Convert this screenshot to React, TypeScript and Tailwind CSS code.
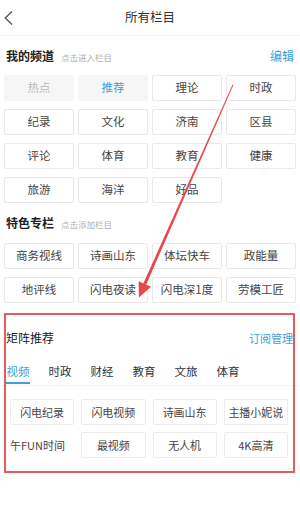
import type { ReactNode } from "react";

const MY_CHANNELS = [
  "热点", "推荐", "理论", "时政",
  "纪录", "文化", "济南", "区县",
  "评论", "体育", "教育", "健康",
  "旅游", "海洋", "好品",
];

const FEATURED = ["商务视线", "诗画山东", "体坛快车", "政能量", "地评线", "闪电夜读", "闪电深1度", "劳模工匠"];

const TABS = ["视频", "时政", "财经", "教育", "文旅", "体育"];

const MATRIX = ["闪电纪录", "闪电视频", "诗画山东", "主播小妮说", "午FUN时间", "最视频", "无人机", "4K高清"];

function Cell({ children, tone = "normal" }: { children: ReactNode; tone?: "normal" | "fixed" | "active" }) {
  if (tone !== "normal") {
    return (
      <div
        className={
          "flex h-[26px] items-center justify-center rounded-[2px] bg-[#f6f6f6] text-[11.5px] " +
          (tone === "active" ? "text-[#3f9fdc]" : "text-[#b8b8b8]")
        }
      >
        {children}
      </div>
    );
  }
  return (
    <div className="flex h-[26px] items-center justify-center rounded-[2px] border border-[#e9e9e9] bg-white text-[11.5px] text-[#444]">
      {children}
    </div>
  );
}

function SectionHead({ title, hint, action, className }: { title: string; hint?: string; action?: string; className: string }) {
  return (
    <div className={"flex items-center justify-between px-[6px] " + className}>
      <div className="flex items-baseline gap-[7px]">
        <span className="text-[12px] font-bold text-[#222]">{title}</span>
        {hint && <span className="text-[8.5px] text-[#b0b0b0]">{hint}</span>}
      </div>
      {action && <span className="text-[12px] text-[#3f9fdc]">{action}</span>}
    </div>
  );
}

export default function App() {
  return (
    <div className="relative h-[527px] w-[300px] overflow-hidden bg-white font-['Noto_Sans_CJK_SC',sans-serif]">
      {/* top bar */}
      <div className="grid h-[36px] grid-cols-[1fr_auto_1fr] items-center border-b border-[#f3f3f3]">
        <svg width="16" height="16" viewBox="0 0 16 16" className="ml-[1px]">
          <path d="M11 1.5 L4.2 8 L11 14.5" fill="none" stroke="#555" strokeWidth="1.3" />
        </svg>
        <span className="text-[12.5px] text-[#333]">所有栏目</span>
        <span />
      </div>

      <SectionHead title="我的频道" hint="点击进入栏目" action="编辑" className="h-[39px]" />
      <div className="grid grid-cols-4 gap-x-[4px] gap-y-[8px] px-[4px]">
        {MY_CHANNELS.map((name, i) => (
          <Cell key={name} tone={i === 0 ? "fixed" : i === 1 ? "active" : "normal"}>
            {name}
          </Cell>
        ))}
      </div>

      <SectionHead title="特色专栏" hint="点击添加栏目" className="h-[40px]" />
      <div className="grid grid-cols-4 gap-x-[4px] gap-y-[8px] px-[4px]">
        {FEATURED.map((name) => (
          <Cell key={name}>{name}</Cell>
        ))}
      </div>

      {/* matrix */}
      <div className="mt-[19px] flex h-[32px] items-center justify-between pl-[6px] pr-[7px]">
        <span className="text-[12px] text-[#222]">矩阵推荐</span>
        <span className="text-[11px] text-[#3f9fdc]">订阅管理</span>
      </div>
      <div className="flex h-[32px] gap-[18px] border-b border-[#f3f3f3] px-[6px]">
        {TABS.map((t, i) => (
          <div key={t} className="flex h-full flex-col items-center justify-end">
            <span className={"text-[11.5px] leading-[16px] " + (i === 0 ? "text-[#3f9fdc]" : "text-[#333]")}>{t}</span>
            <span className={"mb-[1px] mt-[3px] h-[2px] w-[24px] " + (i === 0 ? "bg-[#3f9fdc]" : "bg-transparent")} />
          </div>
        ))}
      </div>
      <div className="mt-[13px] grid grid-cols-4 gap-x-[7px] gap-y-[7px] pl-[10px] pr-[12px]">
        {MATRIX.map((name, i) =>
          i === 4 ? (
            <div key={name} className="flex h-[26px] items-center justify-start text-[11px] text-[#444]">
              {name}
            </div>
          ) : (
            <div
              key={name}
              className="flex h-[26px] items-center justify-center rounded-[2px] border border-[#ececec] bg-white text-[11px] text-[#444]"
            >
              {name}
            </div>
          )
        )}
      </div>

      {/* annotation overlay */}
      <div className="absolute left-[4px] top-[313px] h-[160px] w-[291px] border-2 border-[#e65c5e]" />
      <svg className="pointer-events-none absolute left-0 top-0" width="300" height="527" viewBox="0 0 300 527">
        <polygon points="233.4,85 232.6,84.6 143.3,283.6 146.1,284.8" fill="#e8484b" />
        <polygon points="139,297.5 151,286.8 138.6,281.2" fill="#e8484b" />
      </svg>
    </div>
  );
}
